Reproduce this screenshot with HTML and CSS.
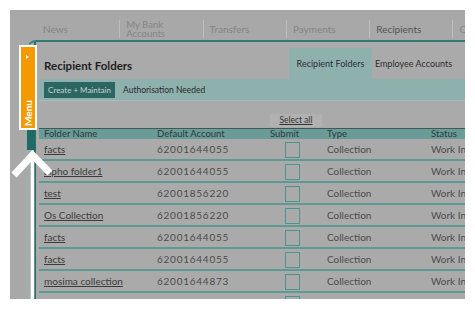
FILE: index.html
```html
<!DOCTYPE html>
<html lang="en">
<head>
  <meta charset="UTF-8">
  <title>Recipients</title>
  <link rel="stylesheet" href="styles.css">
</head>
<body>

<div class="frame">
  <div class="page">
    <nav class="topnav">
      <a class="tab">News</a>
      <a class="tab two-line">My Bank<br>Accounts</a>
      <a class="tab">Transfers</a>
      <a class="tab">Payments</a>
      <a class="tab active">Recipients</a>
      <a class="tab">Cards</a>
    </nav>

    <div class="panel">
      <div class="panel-inner">
        <div class="panel-head">
          <h1>Recipient Folders</h1>
          <div class="subtabs">
            <span class="subtab active">Recipient Folders</span>
            <span class="subtab">Employee Accounts</span>
          </div>
        </div>

        <div class="subnav">
          <span class="btn">Create + Maintain</span>
          <span class="subnav-link">Authorisation Needed</span>
        </div>

        <div class="tools">
          <a class="select-all">Select all</a>
        </div>

        <div class="table">
          <div class="row head">
            <span>Folder Name</span>
            <span>Default Account</span>
            <span>Submit</span>
            <span>Type</span>
            <span>Status</span>
          </div>
          <div class="row">
            <a class="name">facts</a><span class="acc">62001644055</span><span class="check"><i></i></span><span>Collection</span><span>Work In Progress</span>
          </div>
          <div class="row">
            <a class="name">alpho folder1</a><span class="acc">62001644055</span><span class="check"><i></i></span><span>Collection</span><span>Work In Progress</span>
          </div>
          <div class="row">
            <a class="name">test</a><span class="acc">62001856220</span><span class="check"><i></i></span><span>Collection</span><span>Work In Progress</span>
          </div>
          <div class="row">
            <a class="name">Os Collection</a><span class="acc">62001856220</span><span class="check"><i></i></span><span>Collection</span><span>Work In Progress</span>
          </div>
          <div class="row">
            <a class="name">facts</a><span class="acc">62001644055</span><span class="check"><i></i></span><span>Collection</span><span>Work In Progress</span>
          </div>
          <div class="row">
            <a class="name">facts</a><span class="acc">62001644055</span><span class="check"><i></i></span><span>Collection</span><span>Work In Progress</span>
          </div>
          <div class="row">
            <a class="name">mosima collection</a><span class="acc">62001644873</span><span class="check"><i></i></span><span>Collection</span><span>Work In Progress</span>
          </div>
          <div class="row">
            <a class="name">test folder 2</a><span class="acc">62001644055</span><span class="check"><i></i></span><span>Collection</span><span>Work In Progress</span>
          </div>
        </div>
      </div>
    </div>
  </div>

  <div class="menu-base"></div>
  <div class="menu-tab">
    <span class="menu-arrow"></span>
    <span class="menu-label">Menu</span>
  </div>

  <svg class="pointer" width="50" height="170" viewBox="0 0 50 170">
    <line x1="22.5" y1="12" x2="22.5" y2="170" stroke="#fff" stroke-width="3.5"/>
    <polyline points="4,32 22.5,12 40,30" fill="none" stroke="#fff" stroke-width="7"/>
  </svg>
</div>

</body>
</html>
```

FILE: styles.css
```css
* {
  margin: 0;
  padding: 0;
  box-sizing: border-box;
}

body {
  background: #fff;
  font-family: 'Lato', 'Liberation Sans', sans-serif;
  color: #4a4a4a;
}

.frame {
  position: relative;
  margin: 10px 0 0 10px;
  width: 455px;
  height: 289px;
  overflow: hidden;
  background: #a8a8a8;
}

.page {
  width: 540px;
}

/* top navigation */
.topnav {
  display: flex;
  height: 30px;
  padding-left: 27px;
}

.tab {
  display: flex;
  align-items: center;
  width: 83.3px;
  height: 18px;
  margin-top: 10px;
  padding-left: 6px;
  border-right: 1px solid #bdbdbd;
  font-size: 10px;
  color: #858585;
}

.tab.two-line {
  font-size: 9.5px;
  line-height: 9px;
}

.tab.active {
  color: #555;
}

/* content panel */
.panel {
  margin-left: 17px;
  border-top: 2px solid #2f7b75;
  border-left: 1px solid #93b3b0;
  border-top-left-radius: 9px;
  background: #aaaaaa;
  height: 300px;
}

.panel-inner {
  margin-left: 6px;
  border-left: 2px solid #2e6d68;
  padding-left: 3px;
  height: 100%;
}

.panel-head {
  display: flex;
  align-items: flex-end;
  height: 37px;
}

.panel-head h1 {
  width: 250px;
  padding-left: 5px;
  margin-bottom: 6px;
  font-size: 11.5px;
  line-height: 14px;
  font-weight: 700;
  color: #1f1f1f;
}

.subtabs {
  display: flex;
}

.subtab {
  display: flex;
  align-items: center;
  justify-content: center;
  width: 83px;
  height: 31px;
  font-size: 9px;
  white-space: nowrap;
  color: #2e2e2e;
}

.subtab.active {
  background: #8fb1ae;
}

.subnav {
  display: flex;
  align-items: center;
  height: 22px;
  background: #8fb1ae;
  border-bottom: 1px solid #a3bfbc;
}

.btn {
  display: flex;
  align-items: center;
  justify-content: center;
  width: 71px;
  height: 16px;
  margin-left: 5px;
  background: #2c6662;
  color: #c4d3d2;
  font-size: 8px;
  white-space: nowrap;
}

.subnav-link {
  margin-left: 8px;
  font-size: 8.5px;
  color: #2a2a2a;
}

.tools {
  height: 27px;
  padding-top: 13px;
  padding-left: 231px;
}

.select-all {
  display: block;
  width: 52px;
  height: 13px;
  background: #b1b1b1;
  text-align: center;
  font-size: 8.5px;
  line-height: 13px;
  color: #333;
  text-decoration: underline;
}

/* table */
.row {
  display: grid;
  grid-template-columns: 113px 113px 57px 104px 1fr;
  align-items: center;
  height: 22px;
  border-bottom: 2px solid #5c9b95;
  font-size: 10px;
}

.row > * {
  padding-left: 5px;
  white-space: nowrap;
}

.row.head {
  height: 11px;
  border-top: 1px solid #3d5a57;
  border-bottom: none;
  background: #6b9b97;
  font-size: 9.5px;
  line-height: 10px;
  color: #2a3a39;
}

.name {
  color: #3b3b3b;
  text-decoration: underline;
}

.acc {
  letter-spacing: 0.75px;
}

.check {
  padding-left: 20px;
}

.check i {
  display: block;
  width: 15px;
  height: 16px;
  margin-top: 1px;
  border: 1px solid #4e948e;
}

/* overlay: menu tab and pointer */
.menu-base {
  position: absolute;
  left: 17px;
  top: 118px;
  width: 8px;
  height: 22px;
  background: #1f6a64;
}

.menu-tab {
  position: absolute;
  left: 9px;
  top: 35px;
  width: 18px;
  height: 85px;
  border: 2px solid #fff;
  background: #f49a00;
}

.menu-arrow {
  position: absolute;
  left: 5px;
  top: 8px;
  width: 0;
  height: 0;
  border-top: 2.5px solid transparent;
  border-bottom: 2.5px solid transparent;
  border-left: 3px solid #fff;
}

.menu-label {
  position: absolute;
  left: 1px;
  bottom: 2px;
  writing-mode: vertical-rl;
  transform: rotate(180deg);
  font-size: 10px;
  font-weight: 700;
  color: #fff;
}

.pointer {
  position: absolute;
  left: 0;
  top: 133px;
}
```
